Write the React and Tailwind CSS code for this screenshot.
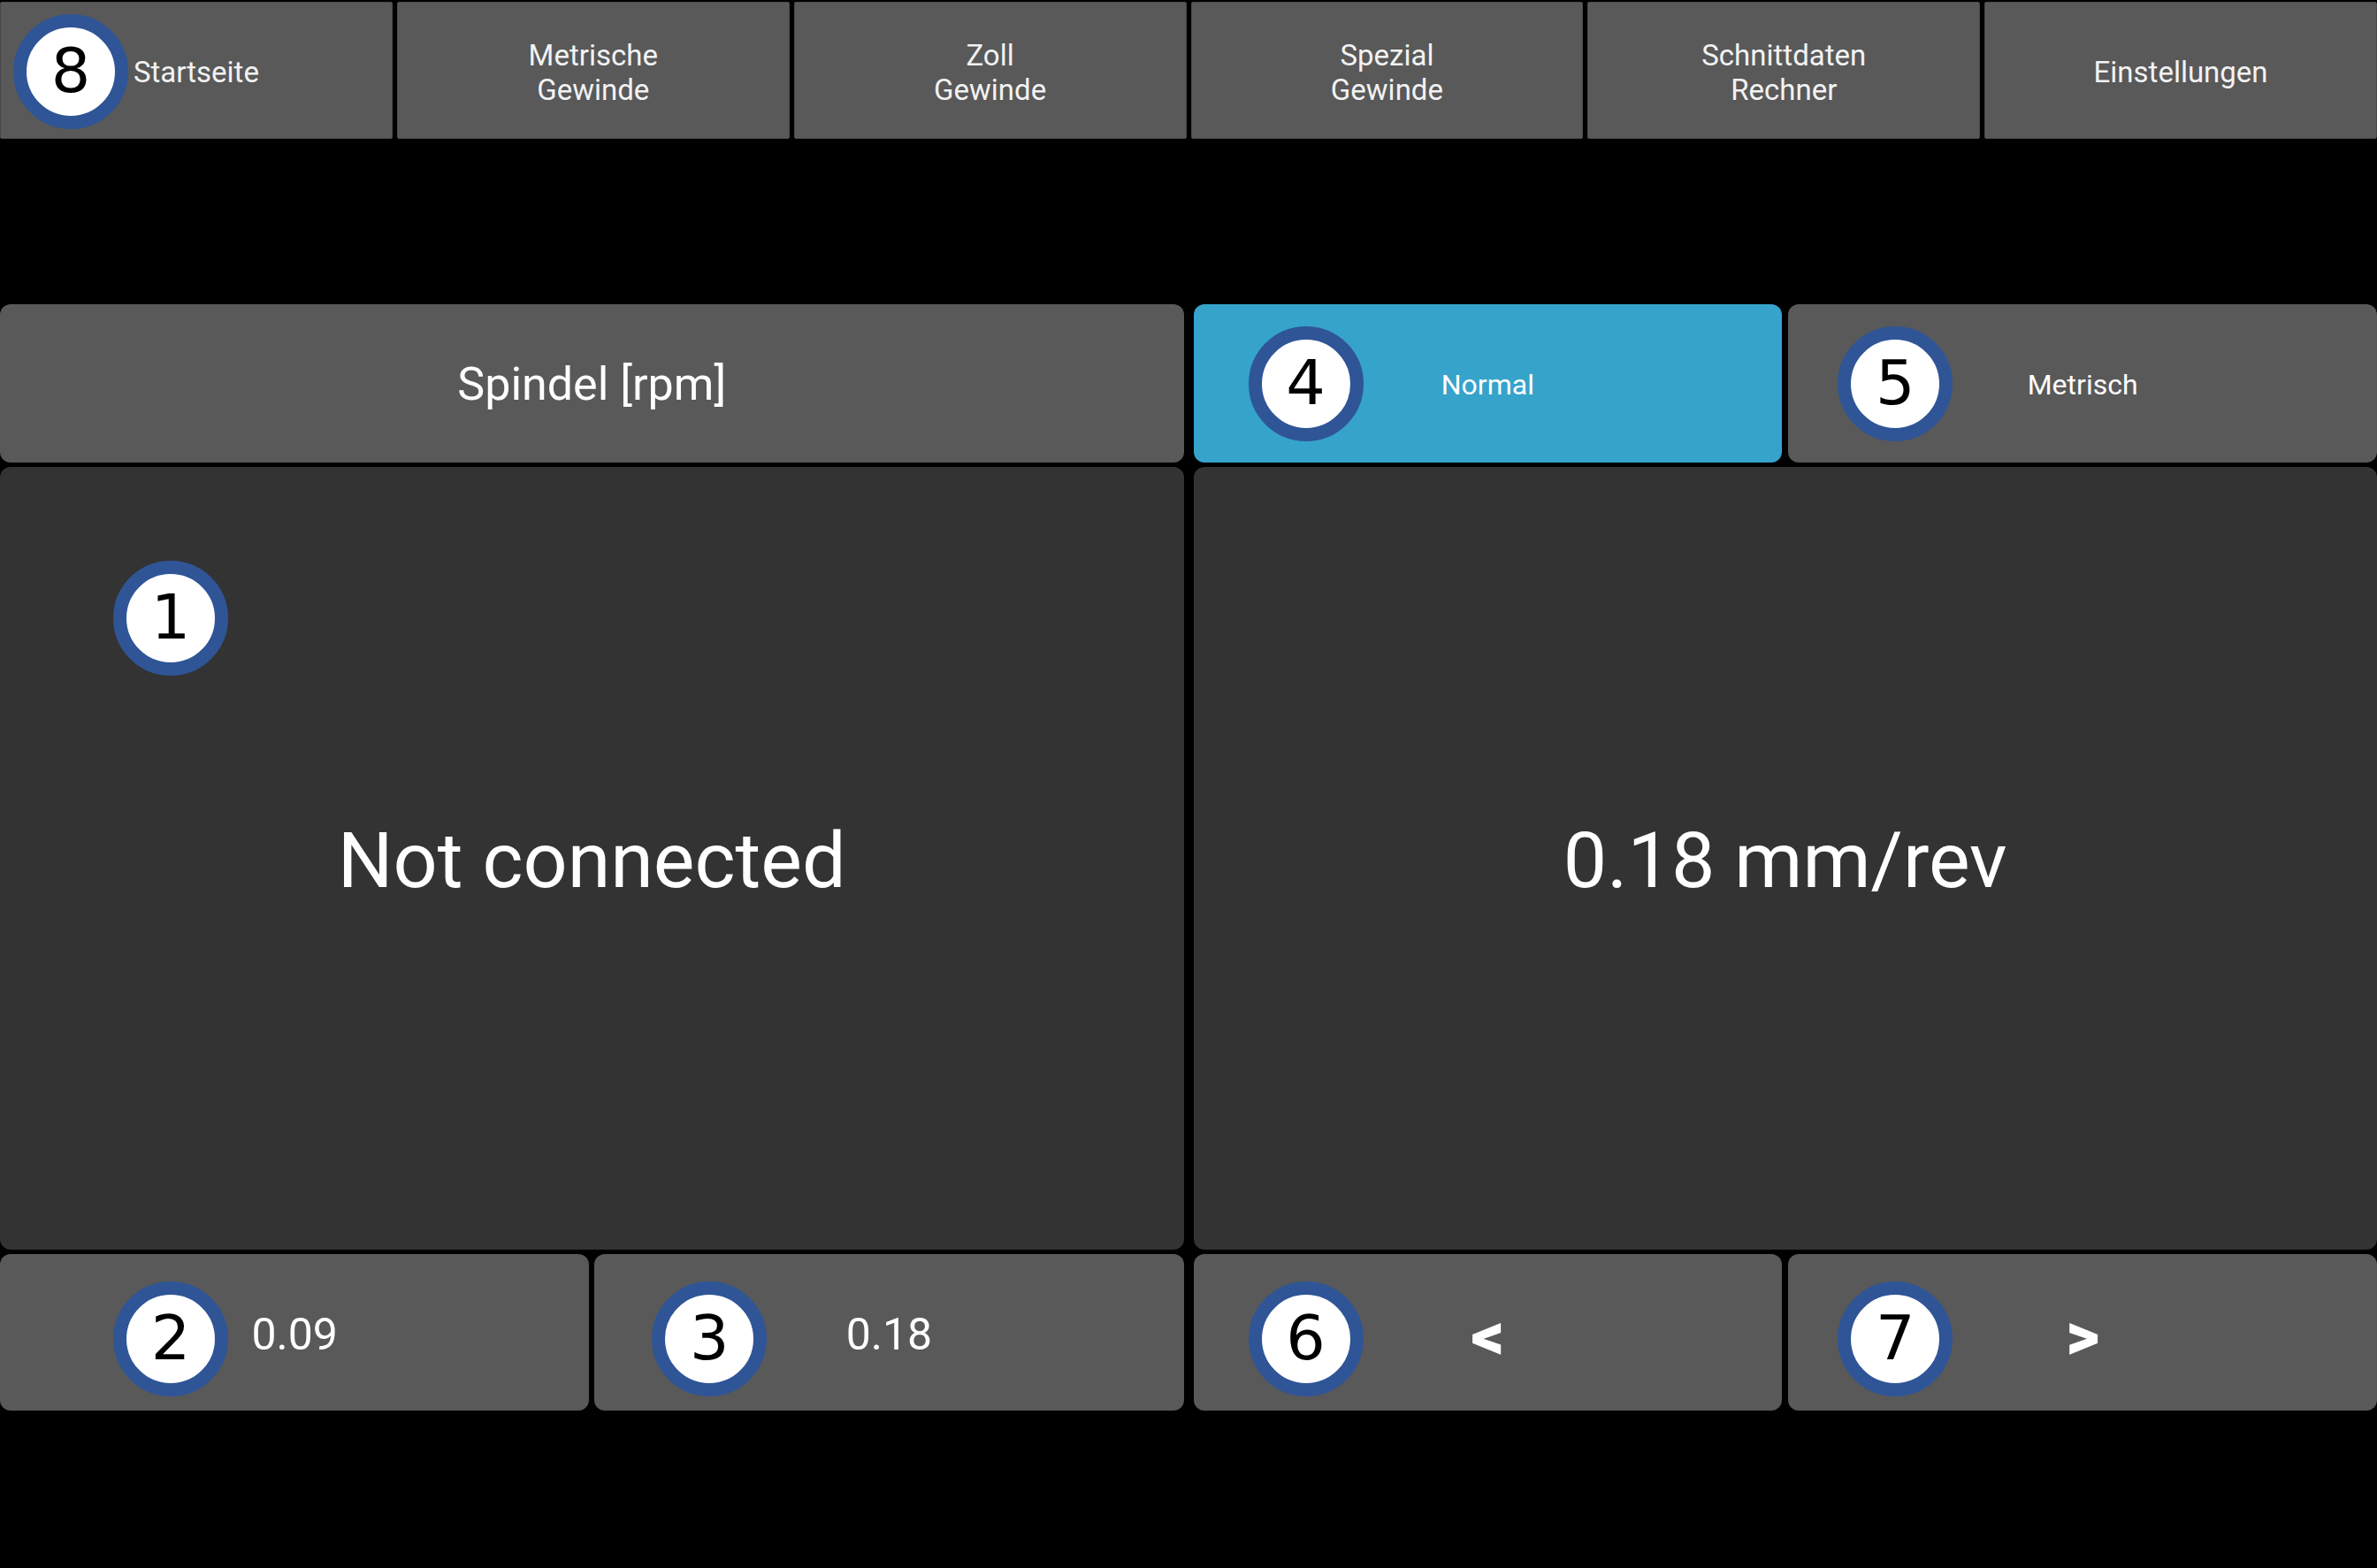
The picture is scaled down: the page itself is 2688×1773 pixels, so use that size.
import React from 'react'

const navItems = [
    ['Startseite'],
    ['Metrische', 'Gewinde'],
    ['Zoll', 'Gewinde'],
    ['Spezial', 'Gewinde'],
    ['Schnittdaten', 'Rechner'],
    ['Einstellungen'],
]

// numbered callout drawn over the screenshot
function Badge({ n, className }) {
    return (
        <div
            className={`absolute w-[130px] h-[130px] rounded-full border-[15px] border-[#2f5597] bg-white flex items-center justify-center text-black text-[70px] font-normal leading-none font-['DejaVu_Sans',sans-serif] ${className}`}
        >
            <span className="-mt-[2px]">{n}</span>
        </div>
    )
}

function Tile({ children, className = '' }) {
    return (
        <div className={`relative flex items-center justify-center rounded-[12px] text-white ${className}`}>
            {children}
        </div>
    )
}

export default function App() {
    return (
        <div className="w-[2688px] h-[1773px] bg-black overflow-hidden font-['Roboto',sans-serif]">
            {/* top navigation */}
            <nav className="grid grid-cols-6 gap-[5px] h-[157px] pt-[2px]">
                {navItems.map((lines, i) => (
                    <div
                        key={i}
                        className="relative flex flex-col items-center justify-center pt-[4px] bg-[#595959] border border-[#4a4a4a] rounded-[2px] text-[#f2f2f2] text-[33px] leading-[39px]"
                    >
                        {i === 0 && <Badge n="8" className="left-[14px] top-[13px]" />}
                        {lines.map((l) => (
                            <span key={l}>{l}</span>
                        ))}
                    </div>
                ))}
            </nav>

            <div className="grid grid-cols-2 gap-x-[11px] mt-[187px]">
                {/* LEFT COLUMN */}
                <div className="flex flex-col gap-[5px]">
                    <Tile className="h-[179px] bg-[#595959] text-[52px]">
                        <span className="mt-[3px]">Spindel [rpm]</span>
                    </Tile>
                    <Tile className="h-[885px] bg-[#333333] text-[88px]">
                        <Badge n="1" className="left-[128px] top-[106px]" />
                        <span className="mt-[4px]">Not connected</span>
                    </Tile>
                    <div className="grid grid-cols-2 gap-[6px]">
                        <Tile className="h-[177px] bg-[#595959] text-[50px]">
                            <Badge n="2" className="left-[128px] top-[31px]" />
                            <span className="mt-[6px]">0.09</span>
                        </Tile>
                        <Tile className="h-[177px] bg-[#595959] text-[50px]">
                            <Badge n="3" className="left-[65px] top-[31px]" />
                            <span className="mt-[6px]">0.18</span>
                        </Tile>
                    </div>
                </div>

                {/* RIGHT COLUMN */}
                <div className="flex flex-col gap-[5px]">
                    <div className="grid grid-cols-2 gap-[7px]">
                        <Tile className="h-[179px] bg-[#36a3cb] text-[32px]">
                            <Badge n="4" className="left-[62px] top-[25px]" />
                            <span className="mt-[2px]">Normal</span>
                        </Tile>
                        <Tile className="h-[179px] bg-[#595959] text-[32px]">
                            <Badge n="5" className="left-[56px] top-[25px]" />
                            <span className="mt-[2px]">Metrisch</span>
                        </Tile>
                    </div>
                    <Tile className="h-[885px] bg-[#333333] text-[88px]">
                        <span className="mt-[4px]">0.18 mm/rev</span>
                    </Tile>
                    <div className="grid grid-cols-2 gap-[7px]">
                        <Tile className="h-[177px] bg-[#595959] text-[74px] font-black">
                            <Badge n="6" className="left-[62px] top-[31px]" />
                            <span className="mt-[8px]">&lt;</span>
                        </Tile>
                        <Tile className="h-[177px] bg-[#595959] text-[74px] font-black">
                            <Badge n="7" className="left-[56px] top-[31px]" />
                            <span className="mt-[8px]">&gt;</span>
                        </Tile>
                    </div>
                </div>
            </div>
        </div>
    )
}
